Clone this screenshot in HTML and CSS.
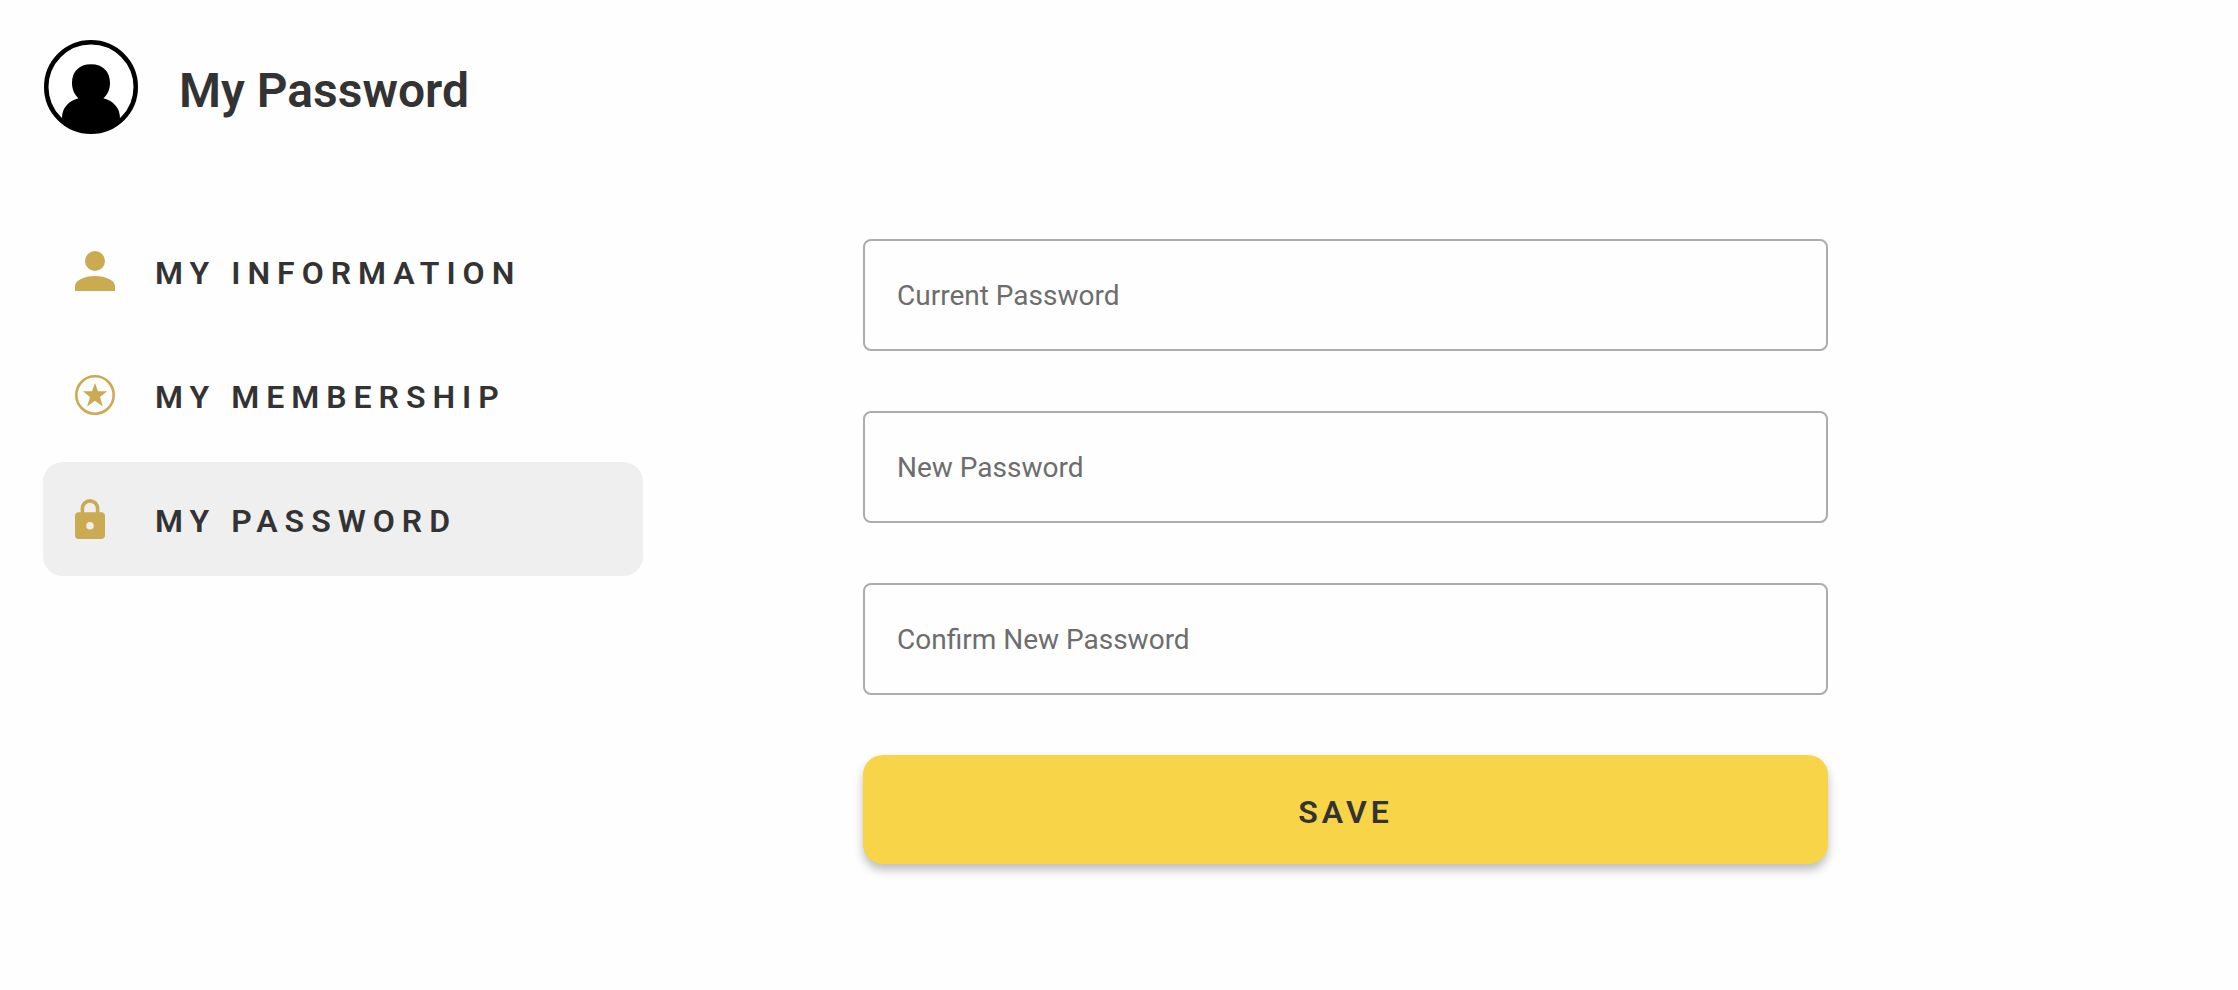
FILE: index.html
```html
<!DOCTYPE html>
<html lang="en">
<head>
  <meta charset="UTF-8" />
  <meta name="viewport" content="width=device-width, initial-scale=1.0"/>
  <title>My Password</title>
  <link rel="stylesheet" href="styles.css">
</head>
<body>
  <header class="page-header">
    <svg class="avatar" viewBox="0 0 94 94" aria-hidden="true">
      <circle cx="47" cy="47" r="44.75" fill="#fff" stroke="#000" stroke-width="4.5"/>
      <path d="M47 24.3c12 0 19 7.500 19 18.700 0 6.500-2.500 11.500-6.500 15.300C69.500 61 76 68 76 78.200A45 45 0 0 1 47 93A45 45 0 0 1 18 78.200C18 68 24.500 61 34.500 58.300 30.500 54.500 28 49.500 28 43c0-11.200 7-18.700 19-18.700z"/>
    </svg>
    <h1>My Password</h1>
  </header>

  <main class="account">
    <nav class="account-nav">
      <a href="#information" class="nav-item">
        <svg class="nav-icon" viewBox="0 0 40 40" aria-hidden="true">
          <circle cx="20" cy="10" r="10"/>
          <path d="M20 25C9 25 0 29.500 0 35v5h40v-5c0-5.500-9-10-20-10z"/>
        </svg>
        <span>MY INFORMATION</span>
      </a>
      <a href="#membership" class="nav-item">
        <svg class="nav-icon" viewBox="0 0 40 40" aria-hidden="true">
          <circle cx="20" cy="20" r="18.700" fill="none" stroke="#cbab52" stroke-width="2.600"/>
          <path d="M20 8l3 8.200h9.200l-7.200 5.900 2.900 9.500-7.900-5.900-7.900 5.900 2.900-9.500-7.200-5.900h9.200z"/>
        </svg>
        <span>MY MEMBERSHIP</span>
      </a>
      <a href="#password" class="nav-item active" aria-current="page">
        <svg class="nav-icon" viewBox="0 0 40 40" aria-hidden="true">
          <path fill-rule="evenodd" d="M15 0a9.400 9.400 0 0 0-9.400 9.400v3.900H3.800A3.800 3.800 0 0 0 0 17.100v19.100A3.800 3.800 0 0 0 3.800 40h22.400a3.800 3.800 0 0 0 3.800-3.800V17.100a3.800 3.800 0 0 0-3.800-3.800h-1.800V9.400A9.400 9.400 0 0 0 15 0zm0 3.700a5.800 5.800 0 0 1 5.800 5.800v3.800H9.200V9.500A5.800 5.800 0 0 1 15 3.700zm0 19.200a3.800 3.800 0 1 1 0 7.600 3.800 3.800 0 0 1 0-7.600z"/>
        </svg>
        <span>MY PASSWORD</span>
      </a>
    </nav>

    <form id="password-form" class="password-form">
      <input type="password" name="current" placeholder="Current Password" aria-label="Current Password" />
      <input type="password" name="new" placeholder="New Password" aria-label="New Password" />
      <input type="password" name="confirm" placeholder="Confirm New Password" aria-label="Confirm New Password" />
      <button type="submit">SAVE</button>
    </form>
  </main>
</body>
</html>
```
FILE: styles.css
```css
* {
  box-sizing: border-box;
}

body {
  margin: 0;
  padding: 40px 43px;
  font-family: Roboto, sans-serif;
  background: #fefefe;
  color: #333;
}

.page-header {
  display: flex;
  align-items: center;
  gap: 41px;
  margin-bottom: 80px;
  padding-left: 1px;
}

.avatar {
  width: 94px;
  height: 94px;
}

.page-header h1 {
  margin: 0;
  padding-top: 6px;
  font-size: 48px;
  font-weight: 600;
}

.account {
  display: flex;
  align-items: flex-start;
  gap: 220px;
}

.account-nav {
  flex: 0 1 600px;
  display: flex;
  flex-direction: column;
  gap: 10px;
}

.nav-item {
  display: flex;
  align-items: center;
  gap: 40px;
  height: 114px;
  padding: 0 32px;
  border-radius: 20px;
  color: #333;
  font-size: 32px;
  font-weight: 600;
  letter-spacing: 7px;
  text-decoration: none;
}

.nav-item.active {
  background: #efefef;
}

.nav-item span {
  padding-top: 4px;
}

.nav-icon {
  flex: none;
  width: 40px;
  height: 40px;
  fill: #cbab52;
}

.password-form {
  flex: 0 1 965px;
  display: flex;
  flex-direction: column;
  gap: 60px;
  padding-top: 25px;
}

.password-form input {
  width: 100%;
  height: 112px;
  padding: 0 32px;
  border: 2px solid #acacac;
  border-radius: 8px;
  background: transparent;
  color: #333;
  font-family: inherit;
  font-size: 28px;
}

.password-form input::placeholder {
  color: #6d6d6d;
  opacity: 1;
}

.password-form button {
  height: 109px;
  padding: 4px 0 0;
  border: none;
  border-radius: 20px;
  background: #f8d448;
  box-shadow: 0 6px 10px rgba(0, 0, 0, 0.25);
  color: #333;
  font-family: inherit;
  font-size: 32px;
  font-weight: 600;
  letter-spacing: 4px;
  cursor: pointer;
}
```
